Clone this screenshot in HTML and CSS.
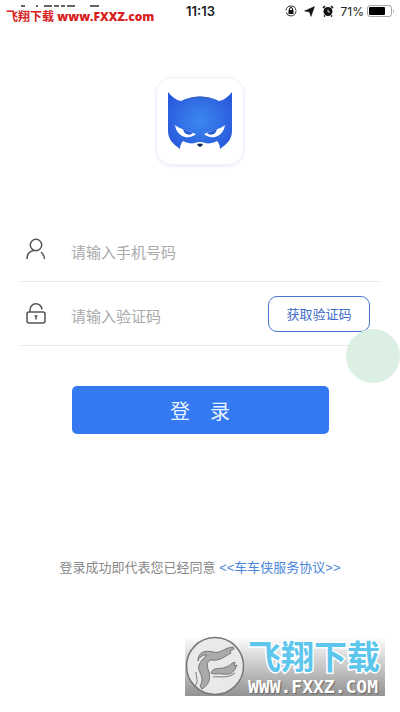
FILE: index.html
```html
<!DOCTYPE html>
<html lang="zh-CN">
<head>
  <meta charset="UTF-8">
  <meta name="viewport" content="width=device-width, initial-scale=1.0">
  <title>登录</title>
  <link rel="stylesheet" href="styles.css">
</head>
<body>

  <!-- Status bar -->
  <header class="status-bar">
    <div class="brand">
      <!-- Carrier and signal, mostly hidden by the site mark -->
      <svg class="carrier" width="100" height="3" viewBox="0 0 100 3">
        <path d="M15 1h4M31 0v2M38 1h8M48 1h5M55 1h4M61 1h8M84 1h9" stroke="#333" stroke-width="1.5"/>
      </svg>
      <div class="site-mark">飞翔下载 <b>www.FXXZ.com</b></div>
    </div>
    <span class="time">11:13</span>
    <div class="status-icons">
      <svg width="12" height="12" viewBox="0 0 12 12">
        <circle cx="6" cy="6" r="5" fill="none" stroke="#333" stroke-width="1" stroke-dasharray="14 2"/>
        <rect x="3.5" y="5" width="5" height="4" fill="#111"/>
        <path d="M4.5 5V4a1.5 1.5 0 0 1 3 0v1" fill="none" stroke="#111"/>
      </svg>
      <svg width="11" height="11" viewBox="0 0 11 11">
        <path d="M10.5 .5 7 10.5 5.5 6 .5 5z" fill="#111" stroke="#111" stroke-width=".5"/>
      </svg>
      <svg width="12" height="12" viewBox="0 0 12 12">
        <circle cx="6" cy="6.5" r="4.5" fill="#111"/>
        <path d="M1 3 3 1M11 3 9 1M3 10.5 2 11.5M9 10.5l1 1" stroke="#111" stroke-width="1.6"/>
        <path d="M6 4.5v2.5h2" fill="none" stroke="#fff" stroke-width=".8"/>
      </svg>
      <span class="percent">71%</span>
      <svg width="28" height="12" viewBox="0 0 28 12">
        <rect x=".5" y=".5" width="24" height="11" rx="2.5" fill="#fff" stroke="#aaa"/>
        <rect x="2" y="2" width="16" height="8" rx="1" fill="#000"/>
        <path d="M26 4q2 2 0 4z" fill="#aaa"/>
      </svg>
    </div>
  </header>

  <main class="page">
    <div class="logo">
      <svg width="66" height="60" viewBox="0 0 66 60">
        <defs>
          <radialGradient id="mask" cx=".5" cy=".5" r=".6">
            <stop offset="0" stop-color="#3c88ee"/>
            <stop offset="1" stop-color="#2859dc"/>
          </radialGradient>
        </defs>
        <path d="M1 1C5 6 9 9 14 10C25 4 41 4 52 10C57 9 61 6 65 1V40C65 48 60 53 53 58C53 55 52 52 50 50C46 52 42 53 38 52C36 51 35 51 33 51C31 51 30 51 28 52C24 53 20 52 16 50C14 52 13 55 13 58C6 53 1 48 1 40z" fill="url(#mask)"/>
        <path d="M24 7Q33 5 42 7" fill="none" stroke="#3a5fae"/>
        <path d="M8 34C12 38 20 39 29 43C27 45 22 47 18 46C12 44 9 40 8 34zM58 34C54 38 46 39 37 43C39 45 44 47 48 46C54 44 57 40 58 34z" fill="#fff"/>
        <path d="M16 38 26 42C23 45 17 44 16 38zM50 38 40 42C43 45 49 44 50 38z" fill="#2a5cd6"/>
        <path d="M30 53q3-1 6 0q-1 3-3 3t-3-3z" fill="#1c2c54"/>
      </svg>
    </div>

    <form class="login-form">
      <div class="field">
        <label for="phone" aria-label="手机号码">
          <svg width="22" height="24" viewBox="0 0 22 24" fill="none" stroke="#555" stroke-width="1.5">
            <circle cx="11" cy="7" r="5.7"/>
            <path d="M2 21C2 16 5 13 9 12.5M16 14C18 16 19.5 18 19.5 21"/>
          </svg>
        </label>
        <input type="tel" id="phone" placeholder="请输入手机号码">
      </div>
      <div class="field">
        <label for="code" aria-label="验证码">
          <svg width="22" height="24" viewBox="0 0 22 24" fill="none" stroke="#555" stroke-width="1.5">
            <rect x="2" y="10" width="18" height="11" rx="2"/>
            <path d="M5 10V8A6 6 0 0 1 17 7.5"/>
            <path d="M11 13.5v4M9.5 14h3"/>
          </svg>
        </label>
        <input type="text" id="code" placeholder="请输入验证码">
        <button type="button" class="code-button">获取验证码</button>
      </div>
      <button type="submit" class="login-button">登　录</button>
    </form>

    <p class="agreement">登录成功即代表您已经同意 <a href="#">&lt;&lt;车车侠服务协议&gt;&gt;</a></p>
  </main>

  <div class="float-dot"></div>

  <div class="watermark">
    <svg width="60" height="60" viewBox="0 0 60 60">
      <circle cx="30" cy="30" r="28.5" fill="#e9e9e9" stroke="#777" stroke-width="1.5"/>
      <path d="M13 25C13 16 20 14 28 16C36 18 38 12 48 11L49 13L45 15L46 17C40 20 36 25 27 24C22 24 21 29 24 36C26 44 23 49 17 53L15 50C19 44 16 39 14 34C13 30 14 26 22 19C17 19 14 21 13 25z" fill="#aaa" stroke="#777"/>
      <path d="M11 36C11 42 14 45 10 50" fill="none" stroke="#777"/>
      <path d="M26 37C29 30 35 34 41 31C45 30 46 27 50 26L49 30 52 29C49 37 45 39 38 38C33 37 30 39 26 37z" fill="#aaa" stroke="#777"/>
      <path d="M28 41C35 40 42 43 50 37" fill="none" stroke="#777"/>
    </svg>
    <div class="watermark-text">
      <strong>飞翔下载</strong>
      <span>WWW.FXXZ.COM</span>
    </div>
  </div>

</body>
</html>
```
FILE: styles.css
```css
* {
  box-sizing: border-box;
  margin: 0;
  padding: 0;
}
body {
  position: relative;
  min-height: 100vh;
  background-color: #fff;
  font-family: "Liberation Sans", "Noto Sans CJK SC", sans-serif;
  color: #222;
}
svg {
  display: block;
}
.status-bar {
  display: grid;
  grid-template-columns: 1fr auto 1fr;
  grid-template-rows: 22px;
  align-items: center;
  padding: 0 5px 0 6px;
}
.brand {
  align-self: start;
  min-width: 0;
  padding-top: 5px;
  white-space: nowrap;
}
.site-mark {
  color: #d8211d;
  font-size: 12px;
  font-weight: bold;
  line-height: 17px;
}
.site-mark b {
  font-family: "Open Sans", sans-serif;
}
.time {
  font-family: Inter, sans-serif;
  font-size: 13px;
  font-weight: 600;
}
.status-icons {
  display: flex;
  align-items: center;
  justify-content: flex-end;
  gap: 7px;
}
.percent {
  font-family: Inter, sans-serif;
  font-size: 12px;
  margin-right: -4px;
}
.page {
  padding: 55px 20px 0;
}
.logo {
  display: flex;
  justify-content: center;
  align-items: center;
  width: 88px;
  height: 88px;
  margin: 0 auto;
  border: 1px solid #eef2fc;
  border-radius: 16px;
  box-shadow: 0 1px 3px rgba(60, 100, 200, 0.16);
}
.login-form {
  padding-top: 53px;
}
.field {
  display: flex;
  align-items: center;
  height: 64px;
  padding: 0 10px 0 5px;
  border-bottom: 1px solid #ececec;
}
.field label {
  width: 46px;
}
.field input {
  flex: 1;
  min-width: 0;
  padding-top: 6px;
  border: none;
  outline: none;
  background: none;
  font-family: inherit;
  font-size: 15px;
}
.field input::placeholder {
  color: #aaa;
}
.code-button {
  width: 102px;
  height: 36px;
  border: 1px solid #4c76cc;
  border-radius: 9px;
  background-color: #fff;
  color: #3f6bc8;
  font-family: inherit;
  font-size: 13px;
}
.login-button {
  display: block;
  width: calc(100% - 103px);
  height: 48px;
  margin: 40px auto 0;
  border: none;
  border-radius: 5px;
  background-color: #3478f2;
  color: #e6f4ff;
  font-family: inherit;
  font-size: 20px;
}
.agreement {
  margin-top: 124px;
  color: #888;
  font-size: 13px;
  line-height: 20px;
  text-align: center;
}
.agreement a {
  color: #4b86d8;
  text-decoration: none;
}
.float-dot {
  position: absolute;
  right: 0;
  top: 329px;
  width: 54px;
  height: 54px;
  border-radius: 50%;
  background-color: #dbf0e2;
}
.watermark {
  position: absolute;
  right: 15px;
  bottom: 16px;
  display: flex;
  width: 200px;
  height: 60px;
  background: linear-gradient(#fff, #929292);
}
.watermark-text {
  padding-left: 3px;
  white-space: nowrap;
}
.watermark-text strong {
  display: block;
  color: #5cc6ec;
  font-size: 33px;
  line-height: 43px;
  -webkit-text-stroke: 3px #fff;
  paint-order: stroke fill;
}
.watermark-text span {
  display: block;
  color: #fff;
  font-family: "DejaVu Sans Mono", monospace;
  font-size: 18px;
  font-weight: bold;
  line-height: 16px;
  text-shadow: 1px 1px 1px #666;
}
```
